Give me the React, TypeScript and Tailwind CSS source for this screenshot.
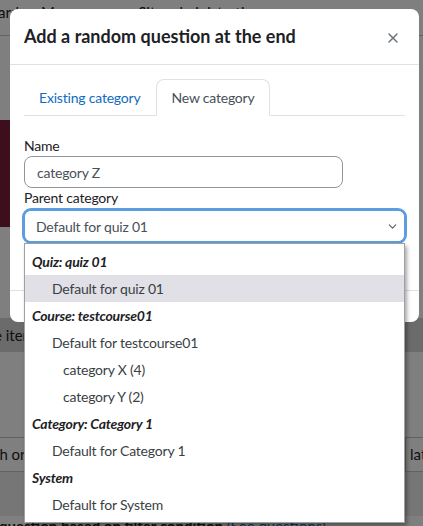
import { X, ChevronDown } from "lucide-react";

const options = [
  { label: "Quiz: quiz 01", group: true },
  { label: "Default for quiz 01", indent: "pl-[27px]", selected: true },
  { label: "Course: testcourse01", group: true },
  { label: "Default for testcourse01", indent: "pl-[27px]" },
  { label: "category X (4)", indent: "pl-[38px]" },
  { label: "category Y (2)", indent: "pl-[38px]" },
  { label: "Category: Category 1", group: true },
  { label: "Default for Category 1", indent: "pl-[27px]" },
  { label: "System", group: true },
  { label: "Default for System", indent: "pl-[27px]" },
];

function BackgroundPage() {
  return (
    <div className="flex flex-col text-[15px] text-[#1d2125]">
      <div className="h-[36px] border-b border-[#c4c4c4] flex items-start gap-[22px] pt-[1px] -ml-[2px]">
        <span>ard</span>
        <span>My courses</span>
        <span>Site administration</span>
      </div>
      <div className="h-[84px]" />
      <div className="h-[107px] w-[10px] bg-[#7a1f3a]" />
      <div className="h-[91px]" />
      <div className="h-[34px] bg-[#d6d6d6] flex items-center -ml-[6px]">e items</div>
      <div className="h-[85px]" />
      <div className="h-[35px] border-y border-[#c4c4c4] flex items-center justify-between -ml-[6px]">
        <span>th or</span>
        <span className="border-l border-[#c4c4c4] pl-[4px] h-full flex items-center w-[18px] overflow-hidden">lat</span>
      </div>
      <div className="h-[44px] bg-[#ececec]" />
      <div className="font-bold -mt-[1px] -ml-[1px] whitespace-nowrap">
        question based on filter condition <span className="font-normal text-[#0f6cbf]">(See questions)</span>
      </div>
    </div>
  );
}

export default function App() {
  return (
    <div
      className="relative w-[423px] h-[526px] overflow-hidden bg-white"
      style={{ fontFamily: 'Lato, "Noto Sans", sans-serif' }}
    >
      <BackgroundPage />
      <div className="absolute inset-0 bg-black/50" />

      <div className="absolute left-[10px] top-[9px] w-[409px] h-[313px] bg-white rounded-[8px] text-[#1d2125] flex flex-col">
        <div className="h-[56px] flex items-center justify-between px-[14px] border-b border-[#dee2e6]">
          <h5 className="text-[18px] font-bold">Add a random question at the end</h5>
          <X className="w-[16px] h-[16px] text-[#6a737b] mr-[4px] mt-[2px]" strokeWidth={2.2} />
        </div>

        <div className="px-[14px] pt-[14px] flex-1 text-[14px] tracking-[-0.2px]">
          <div className="flex border-b border-[#dee2e6] h-[37px] items-end">
            <div className="h-[36px] px-[15px] flex items-center text-[#0f6cbf]">
              Existing category
            </div>
            <div className="h-[37px] -mb-[1px] px-[14px] flex items-center text-[#495057] bg-white border border-[#dee2e6] border-b-white rounded-t-[8px] ml-[1px]">
              New category
            </div>
          </div>

          <div className="pt-[20px]">
            <label className="block leading-[20px]">Name</label>
            <div className="w-[319px] h-[32px] border border-[#8f959e] rounded-[8px] flex items-center px-[12px] text-[#495057]">
              category Z
            </div>
            <label className="block leading-[20px]">Parent category</label>
            <div className="relative">
              <div className="-mx-[2px] rounded-[9px] border-[3px] border-[#5a9ee0] p-0">
                <div className="h-[30px] bg-white rounded-[6px] flex items-center justify-between pl-[11px] pr-[5px] text-[#495057]">
                  <span>Default for quiz 01</span>
                  <ChevronDown className="w-[13px] h-[13px] text-[#5a6168]" strokeWidth={2} />
                </div>
              </div>
              <div className="absolute left-0 right-0 top-full -mt-[1px] bg-white border border-[#a0a0a0] shadow-[2px_3px_4px_rgba(0,0,0,0.35)] py-[4px] z-10">
                {options.map((o) =>
                  o.group ? (
                    <div key={o.label} className="h-[27px] flex items-center pl-[7px] font-bold italic text-[#1d2125]">
                      {o.label}
                    </div>
                  ) : (
                    <div
                      key={o.label}
                      className={`h-[27px] flex items-center ${o.indent} text-[#3a3f44] ${o.selected ? "bg-[#e0e0e6]" : ""}`}
                    >
                      {o.label}
                    </div>
                  )
                )}
              </div>
            </div>
          </div>
        </div>

        <div className="h-[32px] border-t border-[#dee2e6]" />
      </div>
    </div>
  );
}
